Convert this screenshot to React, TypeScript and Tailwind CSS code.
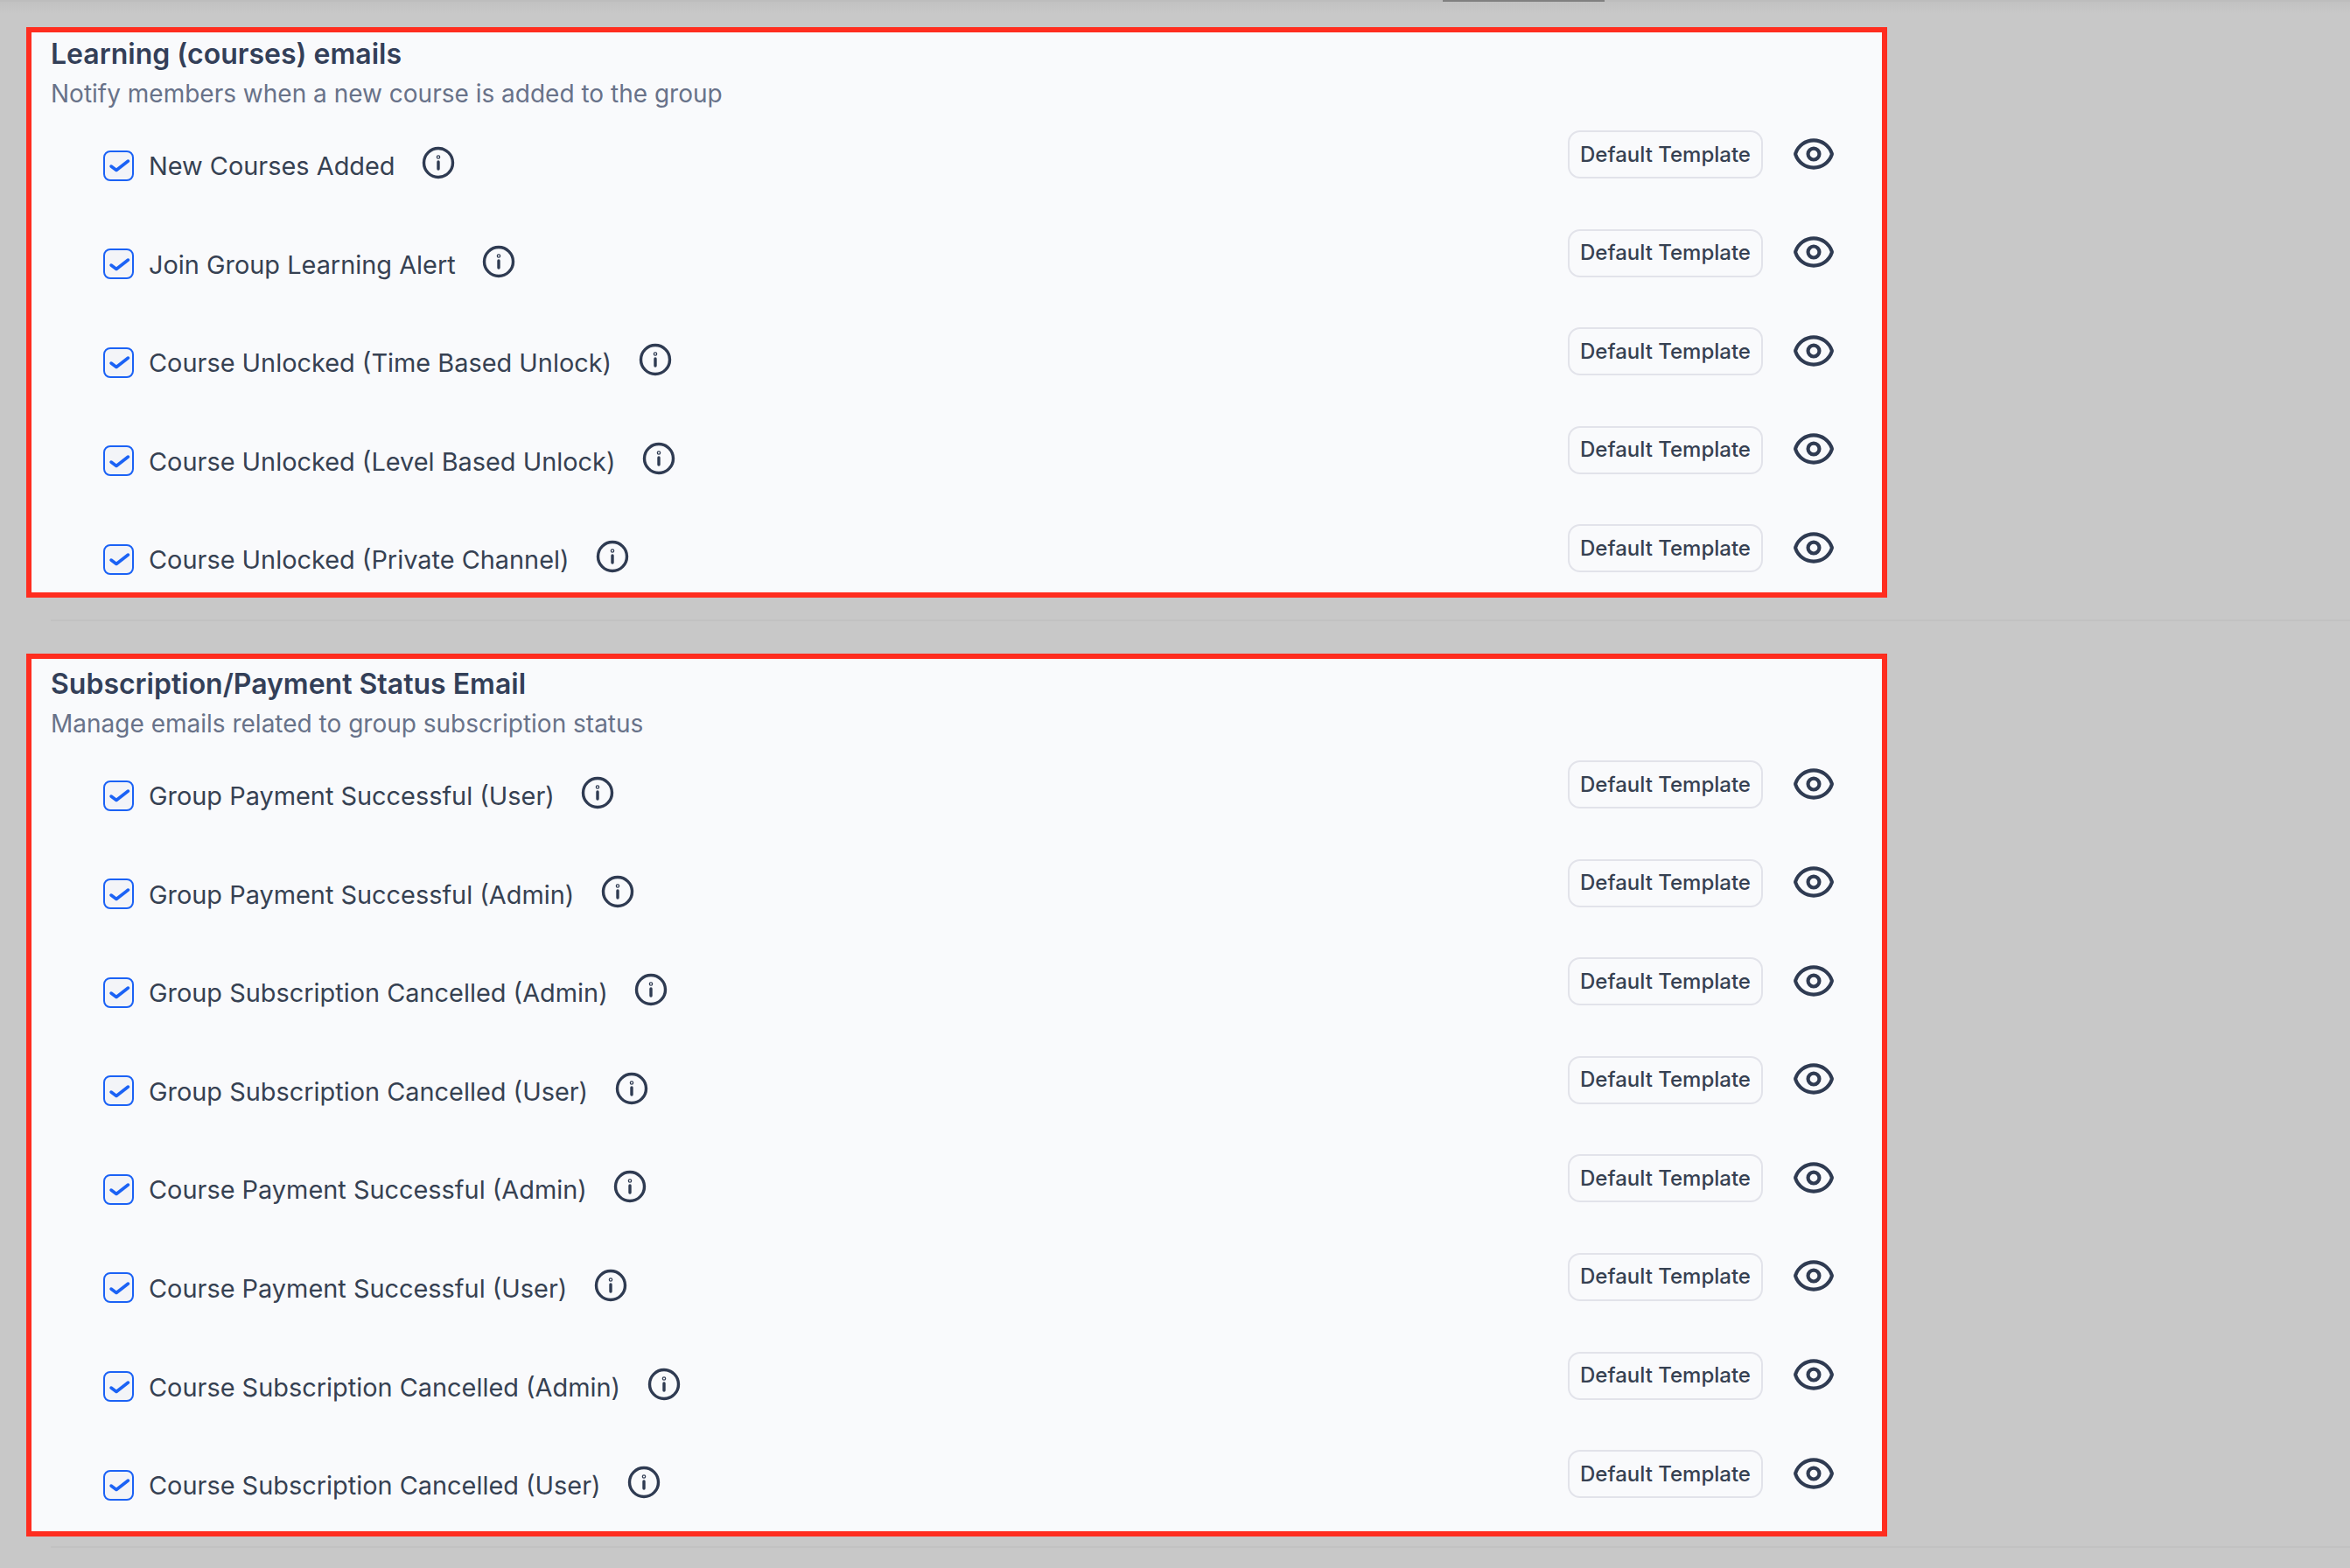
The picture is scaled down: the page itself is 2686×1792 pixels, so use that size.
const learning = [
  "New Courses Added",
  "Join Group Learning Alert",
  "Course Unlocked (Time Based Unlock)",
  "Course Unlocked (Level Based Unlock)",
  "Course Unlocked (Private Channel)",
];

const payment = [
  "Group Payment Successful (User)",
  "Group Payment Successful (Admin)",
  "Group Subscription Cancelled (Admin)",
  "Group Subscription Cancelled (User)",
  "Course Payment Successful (Admin)",
  "Course Payment Successful (User)",
  "Course Subscription Cancelled (Admin)",
  "Course Subscription Cancelled (User)",
];

function CheckBox() {
  return (
    <span className="flex h-[35px] w-[35px] shrink-0 items-center justify-center rounded-[8px] border-[2.5px] border-[#1b62f5] bg-[#f3f4f8]">
      <svg width="30" height="30" viewBox="0 0 30 30" fill="none" stroke="#1b62f5" strokeWidth="3.5" strokeLinecap="round" strokeLinejoin="round">
        <path d="M6 16 L12 20.5 L25.5 10" />
      </svg>
    </span>
  );
}

function InfoIcon() {
  return (
    <svg width="38" height="38" viewBox="0 0 38 38" fill="none" stroke="#2f3b52" strokeWidth="3.4" strokeLinecap="round" className="ml-[30.5px] mt-[-6px] shrink-0">
      <circle cx="19" cy="19" r="16.5" />
      <path d="M19 18 V26" />
      <circle cx="19" cy="12.5" r="0.6" />
    </svg>
  );
}

function EyeIcon() {
  return (
    <svg width="50" height="50" viewBox="0 0 24 24" fill="none" stroke="#2f3b52" strokeWidth="2" strokeLinecap="round" strokeLinejoin="round" className="mb-[2px]">
      <path d="M2.036 12.322a1.012 1.012 0 0 1 0-.639C3.423 7.51 7.36 4.5 12 4.5c4.638 0 8.573 3.007 9.963 7.178.07.207.07.431 0 .639C20.577 16.49 16.64 19.5 12 19.5c-4.638 0-8.573-3.007-9.963-7.178Z" />
      <circle cx="12" cy="12" r="3.1" />
    </svg>
  );
}

function Row({ label }: { label: string }) {
  return (
    <div className="flex h-[58px] items-start justify-between">
      <div className="flex items-center pl-[82px] pt-[22px]">
        <CheckBox />
        <span className="ml-[17px] pt-[2px] text-[28.9px] leading-[34px] text-[#364152]">{label}</span>
        <InfoIcon />
      </div>
      <div className="flex items-center gap-[33px] pr-[53px]">
        <button className="h-[55px] w-[223px] rounded-[14px] border-2 border-[#e2e3ea] bg-[#f9fafc] text-[24px] font-medium text-[#364152]">
          Default Template
        </button>
        <EyeIcon />
      </div>
    </div>
  );
}

function Panel({ title, subtitle, rows, className }: { title: string; subtitle: string; rows: string[]; className: string }) {
  return (
    <section className={`w-[2127px] border-[6px] border-[#ff2d1f] bg-[#f9fafc] ${className}`}>
      <h2 className="pl-[22px] text-[32px] font-semibold leading-[40px] text-[#333f58]">{title}</h2>
      <p className="pl-[22px] pt-[6.5px] text-[28px] leading-[36px] text-[#687289]">{subtitle}</p>
      <div className="mt-[24.5px] flex flex-col gap-[54.6px]">
        {rows.map((r) => (
          <Row key={r} label={r} />
        ))}
      </div>
    </section>
  );
}

export default function App() {
  return (
    <div className="h-[1792px] w-[2686px] overflow-hidden bg-[#c8c8c8] font-['Inter',sans-serif]">
      <div className="relative h-[2px] w-full bg-[#bdbdbd]">
        <div className="absolute left-[1649px] top-0 h-[2px] w-[185px] bg-[#808080]" />
      </div>
      <div className="bg-[linear-gradient(#c1c1c1,#c8c8c8_14px)] pl-[30px] pt-[29px]">
        <Panel
          title="Learning (courses) emails"
          subtitle="Notify members when a new course is added to the group"
          rows={learning}
          className="h-[652px] pt-[5px]"
        />
        <div className="ml-[28px] mt-[25px] h-[2px] bg-[#c2c2c2]" />
        <Panel
          title="Subscription/Payment Status Email"
          subtitle="Manage emails related to group subscription status"
          rows={payment}
          className="mt-[37px] h-[1009px] pt-[9px]"
        />
        <div className="ml-[28px] mt-[11px] h-[2px] bg-[#c2c2c2]" />
      </div>
    </div>
  );
}
